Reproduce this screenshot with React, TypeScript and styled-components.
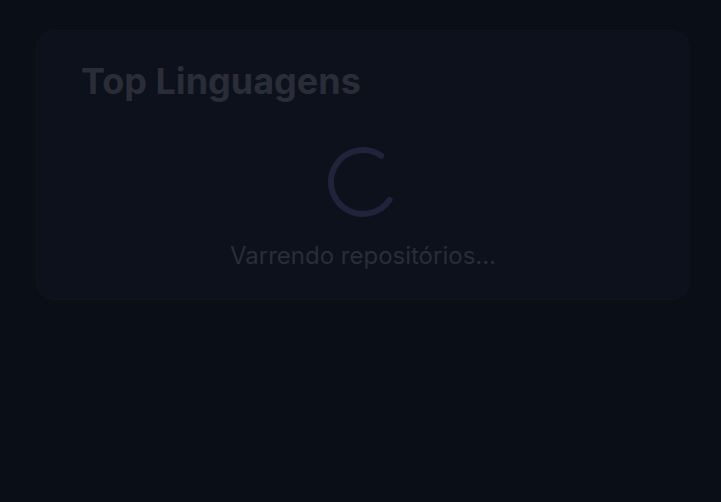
import styled, { createGlobalStyle, keyframes } from "styled-components";

const GlobalStyle = createGlobalStyle`
  html, body {
    margin: 0;
    padding: 0;
    background: #0a0e17;
    font-family: Inter, "Noto Sans", sans-serif;
  }
`;

const Page = styled.main`
  min-height: 502px;
  padding: 30px 31px 0 36px;
  box-sizing: border-box;
`;

const Card = styled.section`
  background: #0d111b;
  border: 1px solid #10141f;
  border-radius: 18px;
  padding: 28px 44px 29px;
  height: 270px;
  box-sizing: border-box;
`;

const Title = styled.h2`
  margin: 0;
  font-size: 36px;
  font-weight: 700;
  color: #2a2d38;
`;

const Loading = styled.div`
  display: flex;
  flex-direction: column;
  align-items: center;
  gap: 23px;
  margin-top: 43px;
`;

const spin = keyframes`
  to { transform: rotate(360deg); }
`;

const Spinner = styled.svg`
  width: 72px;
  height: 72px;
  animation: ${spin} 1s linear infinite;
  animation-play-state: paused;
`;

const Message = styled.p`
  margin: 0;
  font-size: 24px;
  color: #2a2d38;
`;

export default function App() {
  return (
    <>
      <GlobalStyle />
      <Page>
        <Card>
          <Title>Top Linguagens</Title>
          <Loading>
            <Spinner viewBox="0 0 72 72">
              <circle
                cx="36"
                cy="36"
                r="32"
                fill="none"
                stroke="#21233a"
                strokeWidth="6"
                strokeLinecap="round"
                strokeDasharray="151 201"
                transform="rotate(34 36 36)"
              />
            </Spinner>
            <Message>Varrendo repositórios...</Message>
          </Loading>
        </Card>
      </Page>
    </>
  );
}
